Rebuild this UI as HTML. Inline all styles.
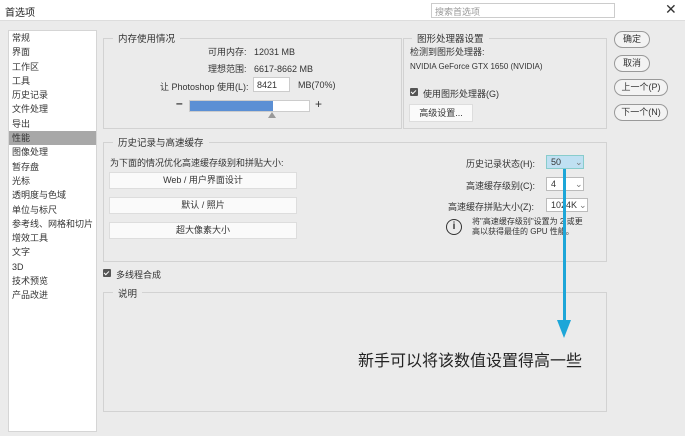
<!DOCTYPE html>
<html><head><meta charset="utf-8"><style>
*{margin:0;padding:0;box-sizing:border-box}
body{width:685px;height:436px;background:#ebebeb;font-family:"Liberation Sans","Noto Sans CJK SC",sans-serif;font-size:9px;color:#333;position:relative;overflow:hidden}
.a{position:absolute;white-space:nowrap}
.grp{position:absolute;border:1px solid #d2d2d2}
.gt{position:absolute;background:#ebebeb;padding:0 5px;font-size:9.5px;color:#333}
.btn{position:absolute;background:#fafafa;border:1px solid #ddd;text-align:center;font-size:9px;color:#333}
.rb{position:absolute;border:1px solid #999;border-radius:9px;background:#f3f3f3;text-align:center;font-size:9px;line-height:15px;color:#333}
.side div{height:14.3px;line-height:14.3px;padding-left:3px;font-size:9px}
.cb{position:absolute;width:8px;height:8px;background:#555;border-radius:1px}
.cb:after{content:"";position:absolute;left:2px;top:1px;width:2px;height:4px;border:solid #fff;border-width:0 1px 1px 0;transform:rotate(45deg)}
.sel{position:absolute;background:#fff;border:1px solid #bbb;font-size:9px;line-height:12px;padding-left:4px}
</style></head><body>
<div class="a" style="left:0;top:0;width:685px;height:21px;background:#fff;border-bottom:1px solid #ddd"></div>
<div class="a" style="left:5px;top:4px;font-size:10px;color:#222">首选项</div>
<div class="a" style="left:431px;top:3px;width:184px;height:15px;border:1px solid #ccc;background:#fff;color:#999;font-size:9px;padding:1px 3px">搜索首选项</div>
<div class="a" style="left:665px;top:1px;font-size:14px;color:#333">✕</div>

<div class="a side" style="left:8px;top:30px;width:89px;height:402px;background:#fff;border:1px solid #d5d5d5;padding-top:0px">
<div>常规</div><div>界面</div><div>工作区</div><div>工具</div><div>历史记录</div><div>文件处理</div><div>导出</div><div style="background:#a8a8a8">性能</div><div>图像处理</div><div>暂存盘</div><div>光标</div><div>透明度与色域</div><div>单位与标尺</div><div>参考线、网格和切片</div><div>增效工具</div><div>文字</div><div>3D</div><div>技术预览</div><div>产品改进</div>
</div>

<div class="grp" style="left:103px;top:38px;width:299px;height:91px"></div>
<div class="gt" style="left:113px;top:31px">内存使用情况</div>
<div class="a" style="left:208px;top:45px">可用内存:&nbsp;&nbsp; 12031 MB</div>
<div class="a" style="left:208px;top:62px">理想范围:&nbsp;&nbsp; 6617-8662 MB</div>
<div class="a" style="left:160px;top:80px">让 Photoshop 使用(L):</div>
<div class="a" style="left:253px;top:77px;width:37px;height:15px;background:#fff;border:1px solid #ccc;padding:2px 3px">8421</div>
<div class="a" style="left:298px;top:80px">MB(70%)</div>
<div class="a" style="left:176px;top:96px;font-size:12px;font-weight:bold">–</div>
<div class="a" style="left:189px;top:100px;width:121px;height:12px;background:#fff;border:1px solid #ccc"><div style="width:83px;height:10px;background:#5b8fd4"></div></div>
<div class="a" style="left:315px;top:97px;font-size:12px">+</div>
<div class="a" style="left:268px;top:112px;width:0;height:0;border:4px solid transparent;border-bottom:6px solid #999;border-top:0"></div>

<div class="grp" style="left:403px;top:38px;width:204px;height:91px"></div>
<div class="gt" style="left:412px;top:31px">图形处理器设置</div>
<div class="a" style="left:410px;top:45px">检测到图形处理器:</div>
<div class="a" style="left:410px;top:62px;font-size:8px">NVIDIA GeForce GTX 1650 (NVIDIA)</div>
<div class="cb" style="left:410px;top:88px"></div>
<div class="a" style="left:423px;top:87px">使用图形处理器(G)</div>
<div class="btn" style="left:409px;top:104px;width:64px;height:18px;line-height:16px">高级设置...</div>

<div class="rb" style="left:614px;top:31px;width:36px;height:17px">确定</div>
<div class="rb" style="left:614px;top:55px;width:36px;height:17px">取消</div>
<div class="rb" style="left:614px;top:79px;width:54px;height:17px">上一个(P)</div>
<div class="rb" style="left:614px;top:104px;width:54px;height:17px">下一个(N)</div>

<div class="grp" style="left:103px;top:142px;width:504px;height:120px"></div>
<div class="gt" style="left:113px;top:135px">历史记录与高速缓存</div>
<div class="a" style="left:110px;top:156px">为下面的情况优化高速缓存级别和拼贴大小:</div>
<div class="btn" style="left:109px;top:172px;width:188px;height:17px;line-height:15px">Web / 用户界面设计</div>
<div class="btn" style="left:109px;top:197px;width:188px;height:17px;line-height:15px">默认 / 照片</div>
<div class="btn" style="left:109px;top:222px;width:188px;height:17px;line-height:15px">超大像素大小</div>
<div class="a" style="left:466px;top:157px">历史记录状态(H):</div>
<div class="sel" style="left:546px;top:155px;width:38px;height:14px;background:#bfe0f2;border-color:#8cc">50<span style="position:absolute;left:28px;color:#777">⌄</span></div>
<div class="a" style="left:466px;top:179px">高速缓存级别(C):</div>
<div class="sel" style="left:546px;top:177px;width:38px;height:14px">4<span style="position:absolute;left:28px;color:#777">⌄</span></div>
<div class="a" style="left:448px;top:200px">高速缓存拼贴大小(Z):</div>
<div class="sel" style="left:546px;top:198px;width:42px;height:14px">1024K<span style="position:absolute;left:32px;color:#777">⌄</span></div>
<div class="a" style="left:446px;top:219px;width:16px;height:16px;border:1.5px solid #333;border-radius:50%;text-align:center;font-weight:bold;font-size:10px;line-height:13px">i</div>
<div class="a" style="left:472px;top:217px;font-size:8px;line-height:10px">将"高速缓存级别"设置为 2 或更<br>高以获得最佳的 GPU 性能。</div>

<div class="cb" style="left:103px;top:269px"></div>
<div class="a" style="left:116px;top:268px">多线程合成</div>

<div class="grp" style="left:103px;top:292px;width:504px;height:120px"></div>
<div class="gt" style="left:113px;top:286px">说明</div>
<div class="a" style="left:358px;top:347px;font-size:16px;color:#222">新手可以将该数值设置得高一些</div>

<div class="a" style="left:563px;top:169px;width:3px;height:155px;background:#1da6d8"></div>
<div class="a" style="left:557px;top:320px;width:0;height:0;border-left:7.5px solid transparent;border-right:7.5px solid transparent;border-top:18px solid #1da6d8"></div>
</body></html>
